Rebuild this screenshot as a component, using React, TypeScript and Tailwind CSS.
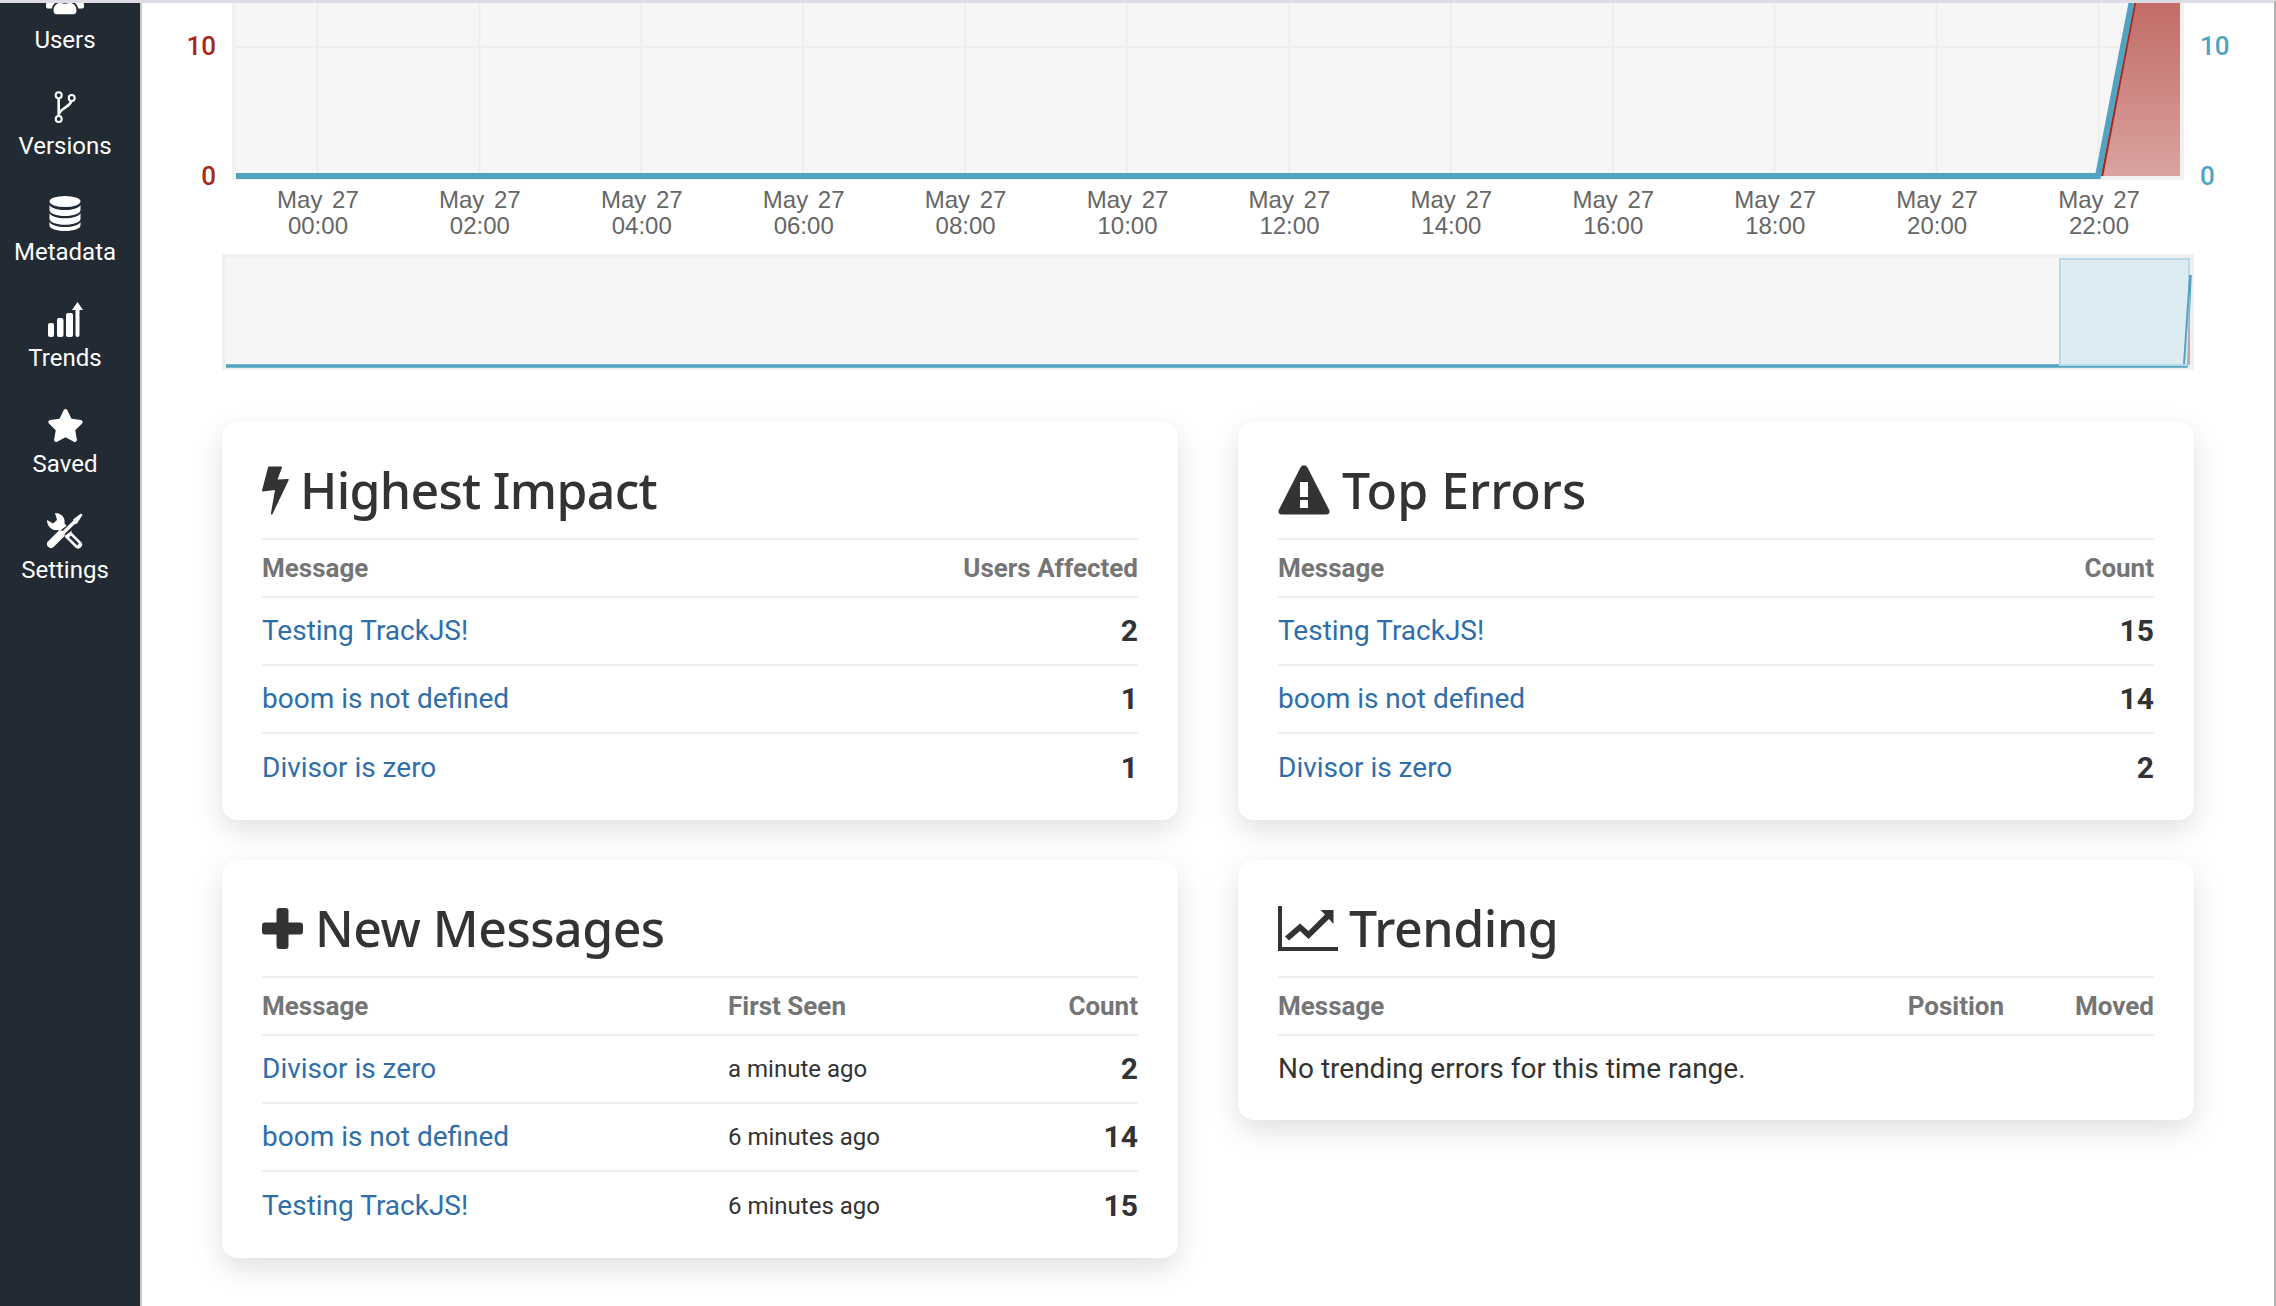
import { FaStar, FaUsers } from 'react-icons/fa';

const hours = ['00:00', '02:00', '04:00', '06:00', '08:00', '10:00', '12:00', '14:00', '16:00', '18:00', '20:00', '22:00'];

function VersionsIcon() {
  return (
    <svg width="36" height="40" viewBox="47 87 36 40" fill="none" stroke="white" strokeWidth="2">
      <circle cx="58.7" cy="95.3" r="3" />
      <circle cx="71.7" cy="98" r="3" />
      <circle cx="58.7" cy="119" r="3" />
      <path d="M58.7 98.5V116" strokeWidth="2.6" />
      <path d="M71.2 101C70.5 107 60 108 59 114" strokeWidth="2.6" />
    </svg>
  );
}

function DatabaseIcon() {
  return (
    <svg width="32" height="36" viewBox="0 0 32 36" fill="white">
      <ellipse cx="16" cy="6.5" rx="15.5" ry="5.5" />
      <path d="M.5 10c2 3.5 8 5 15.500 5s13.500-1.500 15.500-5v5c0 3.500-7 6-15.500 6S.5 18.500.5 15z" />
      <path d="M.5 18.500c2 3.500 8 5 15.500 5s13.500-1.500 15.500-5v5.500c0 3.500-7 6-15.500 6S.5 27.500.5 24z" transform="translate(0 -.3)" />
      <path d="M.5 27c2 3.500 8 5 15.500 5s13.500-1.500 15.500-5v3.500c0 3-7 5.500-15.500 5.500S.5 33.500.5 30.500z" />
    </svg>
  );
}

function TrendsIcon() {
  return (
    <svg width="36" height="36" viewBox="0 0 36 36" fill="white">
      <rect x="1" y="22" width="6" height="14" rx="2" />
      <rect x="10" y="17" width="6.500" height="19" rx="2" />
      <rect x="19" y="12" width="7" height="24" rx="2" />
      <path d="M29.500 9h-3.500L31.500 1 37 9h-3.500v25a2 2 0 0 1-4 0z" transform="translate(-1 0)" />
    </svg>
  );
}

function SettingsIcon() {
  return (
    <svg width="36" height="36" viewBox="0 0 36 36" fill="none">
      <path d="M22 22.500L31 31.500" stroke="white" strokeWidth="8" strokeLinecap="round" />
      <path d="M23 23.500L31 31.500" stroke="#222a33" strokeWidth="2.500" />
      <path d="M8 0c6 0 10.500 4.500 9.500 10.500L25 18l-6 6.500-8-7.500C5 18 0 13.500 0 7l6 3.500 4-3.500-2-7z" fill="white" />
      <path d="M15 20.500l5.500-4L29 8.500" stroke="#222a33" strokeWidth="7" />
      <path d="M14 22L28.500 8" stroke="white" strokeWidth="3.500" />
      <path d="M26 6.500L34 0.500l1.500 1.500-5.500 8.500-2.500 1z" fill="white" />
      <path d="M13.500 21.500L4 31" stroke="white" strokeWidth="8" strokeLinecap="round" />
    </svg>
  );
}

function BoltIcon() {
  return (
    <svg width="27" height="49" viewBox="0 0 27 49" fill="#333333" className="shrink-0">
      <path d="M6 1.500a1 1 0 0 1 1-1h12a1 1 0 0 1 1 1L15.500 13.500 26 13a.8.8 0 0 1 .6 1.200L10.500 48c-.5 1-1.800.7-1.600-.4L13 24 .8 25.500c-.6 0-.9-.4-.8-1z" />
    </svg>
  );
}

function WarningIcon() {
  return (
    <svg width="52" height="50" viewBox="0 0 52 50" fill="#333333" className="shrink-0">
      <path
        fillRule="evenodd"
        d="M22.500 2.500c1.700-3 5.300-3 7 0l21.700 42.500c1 2.200-.3 4.500-2.700 4.500H3.500c-2.400 0-3.700-2.300-2.700-4.500zM22 17h8v15h-8zM22 35h8v8h-8z"
      />
    </svg>
  );
}

function PlusIcon() {
  return (
    <svg width="41" height="41" viewBox="0 0 41 41" fill="#333333" className="shrink-0">
      <rect x="14.500" y="0" width="12" height="41" rx="3" />
      <rect x="0" y="14.500" width="41" height="12" rx="3" />
    </svg>
  );
}

function TrendingIcon() {
  return (
    <svg width="60" height="45" viewBox="0 0 60 45" fill="#333333" className="shrink-0">
      <path d="M0 0h4v41h56v4H0z" />
      <path d="M7 34.500l15-13 8.500 7.500L47 12.500l-4.500-4.500h13V22L51 17 30.500 37l-8.500-8-11 9.500z" transform="translate(0 -4)" />
    </svg>
  );
}

function MainChart() {
  return (
    <svg width="1952" height="177" viewBox="232 3 1952 177" className="block shrink-0">
      <defs>
        <linearGradient id="areaFill" x1="0" y1="0" x2="0" y2="1">
          <stop offset="0%" stopColor="#c36c67" />
          <stop offset="100%" stopColor="#d9a3a0" />
        </linearGradient>
      </defs>
      <rect x="232" y="3" width="1952" height="177" fill="#f1f1f1" />
      <rect x="236" y="3" width="1944" height="173" fill="#f6f6f6" />
      {hours.map((h, i) => (
        <rect key={h} x={316.5 + i * 161.9} y="3" width="2" height="173" fill="#eeeeee" />
      ))}
      <rect x="236" y="46" width="1944" height="2" fill="#eeeeee" />
      <path d="M2103 176L2136 3H2180V176z" fill="url(#areaFill)" />
      <path d="M2102 176L2135 3" stroke="#a8261c" strokeWidth="2.500" fill="none" />
      <path d="M236 176H2098L2131.500 3" stroke="#52a3c0" strokeWidth="6" fill="none" />
    </svg>
  );
}

function Minimap() {
  return (
    <svg width="1972" height="116" viewBox="222 254 1972 116" className="block">
      <rect x="222" y="254" width="1972" height="116" fill="#f0f0f0" />
      <rect x="226" y="258" width="1964" height="108" fill="#f6f6f6" />
      <path d="M226 366H2186L2190 275" stroke="#52a3c0" strokeWidth="3.500" fill="none" />
      <rect x="2060" y="259" width="129" height="106" fill="#ddebf3" stroke="#b6d9ec" strokeWidth="2" />
      <path d="M2187 365L2190 284V364z" fill="#b9a6ad" />
      <path d="M2184 364L2190 275" stroke="#52a3c0" strokeWidth="2" fill="none" />
    </svg>
  );
}

function NavItem({ label, icon }: { label: string; icon: React.ReactNode }) {
  return (
    <div className="flex h-[106px] flex-col items-center">
      <div className="flex h-10 items-center justify-center">{icon}</div>
      <div className="flex h-9 items-center pt-[2px] text-[24px] text-white">{label}</div>
    </div>
  );
}

function Card({ icon, title, gap, children }: { icon: React.ReactNode; title: string; gap: string; children: React.ReactNode }) {
  return (
    <div className="rounded-[16px] bg-white px-10 pb-[18px] shadow-[0_10px_28px_rgba(0,0,0,0.13)]">
      <div className={`flex h-[118px] items-center border-b-2 border-[#eeeeee] pt-[20px] text-[#333333] ${gap}`}>
        {icon}
        <h2 className="font-['Noto_Sans'] text-[50px] leading-none font-medium">{title}</h2>
      </div>
      {children}
    </div>
  );
}

function HeaderRow({ cells }: { cells: string[] }) {
  return (
    <div className="flex h-[58px] items-center border-b-2 border-[#eeeeee] text-[26px] font-bold text-[#757575]">
      <div className={cells[1] === 'First Seen' ? 'w-[466px]' : 'flex-1'}>{cells[0]}</div>
      {cells[1] === 'First Seen' && <div className="flex-1">{cells[1]}</div>}
      {cells[1] === 'Position' && <div className="mr-[71px]">{cells[1]}</div>}
      <div>{cells[cells.length - 1]}</div>
    </div>
  );
}

function Row({ message, seen, value, last }: { message: string; seen?: string; value: string; last?: boolean }) {
  return (
    <div className={`flex h-[68px] items-center text-[#333333] ${last ? '' : 'border-b-2 border-[#eeeeee]'}`}>
      <a className={`text-[28px] text-[#2f6ea8] ${seen ? 'w-[466px]' : 'flex-1'}`}>{message}</a>
      {seen && <div className="flex-1 text-[24px]">{seen}</div>}
      <div className="-mt-[2px] text-[30px] font-bold">{value}</div>
    </div>
  );
}

export default function App() {
  return (
    <div className="relative flex h-screen w-full overflow-hidden border-t-[3px] border-r-2 border-t-[#dcdce4] border-r-[#b0b0b0] bg-white font-['Roboto',sans-serif]">
      <aside className="w-[142px] shrink-0 border-r-2 border-[#c8c8c8] bg-[#222a33] pr-[10px]">
        <div className="-mt-[22px]">
          <NavItem label="Users" icon={<FaUsers className="text-white" size={38} />} />
          <NavItem label="Versions" icon={<VersionsIcon />} />
          <NavItem label="Metadata" icon={<DatabaseIcon />} />
          <NavItem label="Trends" icon={<TrendsIcon />} />
          <NavItem label="Saved" icon={<FaStar className="text-white" size={37} />} />
          <NavItem label="Settings" icon={<SettingsIcon />} />
        </div>
      </aside>

      <main className="min-w-0 flex-1">
        <div className="flex h-[177px]">
          <div className="w-[90px] pt-[28px] pr-4 text-right text-[26px] leading-[30px] font-medium text-[#a8261c]">
            <div>10</div>
            <div className="mt-[100px]">0</div>
          </div>
          <MainChart />
          <div className="w-[90px] pt-[28px] pl-4 text-[26px] leading-[30px] font-medium text-[#52a3c0]">
            <div>10</div>
            <div className="mt-[100px]">0</div>
          </div>
        </div>

        <div className="mt-[7px] ml-[95px] grid w-[1943px] grid-cols-12 font-['Liberation_Sans'] text-[24px] leading-[26px] text-[#666666]">
          {hours.map((h) => (
            <div key={h} className="text-center">
              <div className="[word-spacing:3px]">May 27</div>
              <div>{h}</div>
            </div>
          ))}
        </div>

        <div className="mt-[15px] ml-[80px]">
          <Minimap />
        </div>

        <div className="mt-[52px] grid grid-cols-2 items-start gap-x-[60px] gap-y-[40px] px-[80px]">
          <Card icon={<BoltIcon />} title="Highest Impact" gap="gap-[11px] tracking-[-0.7px]">
            <HeaderRow cells={['Message', 'Users Affected']} />
            <Row message="Testing TrackJS!" value="2" />
            <Row message="boom is not defined" value="1" />
            <Row message="Divisor is zero" value="1" last />
          </Card>
          <Card icon={<WarningIcon />} title="Top Errors" gap="gap-[12px]">
            <HeaderRow cells={['Message', 'Count']} />
            <Row message="Testing TrackJS!" value="15" />
            <Row message="boom is not defined" value="14" />
            <Row message="Divisor is zero" value="2" last />
          </Card>
          <Card icon={<PlusIcon />} title="New Messages" gap="gap-[12px] tracking-[-0.5px]">
            <HeaderRow cells={['Message', 'First Seen', 'Count']} />
            <Row message="Divisor is zero" seen="a minute ago" value="2" />
            <Row message="boom is not defined" seen="6 minutes ago" value="14" />
            <Row message="Testing TrackJS!" seen="6 minutes ago" value="15" last />
          </Card>
          <Card icon={<TrendingIcon />} title="Trending" gap="gap-[11px] tracking-[-0.4px]">
            <HeaderRow cells={['Message', 'Position', 'Moved']} />
            <div className="flex h-[66px] items-center text-[28px] text-[#333333]">No trending errors for this time range.</div>
          </Card>
        </div>
      </main>

      <div className="absolute right-[-2px] bottom-0 h-[10px] w-[2px] bg-[#4b3a7a]" />
    </div>
  );
}
